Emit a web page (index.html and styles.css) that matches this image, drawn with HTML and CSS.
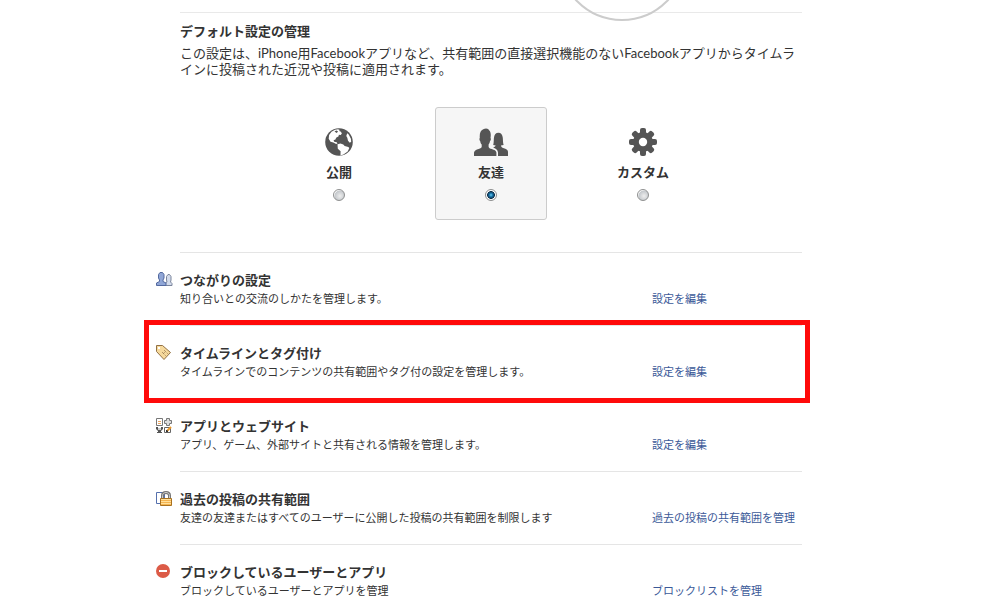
FILE: index.html
```
<!DOCTYPE html>
<html lang="ja">
<head>
    <meta charset="UTF-8">
    <meta name="viewport" content="width=device-width, initial-scale=1.0">
    <title>プライバシー設定</title>
    <link rel="stylesheet" href="styles.css">
</head>
<body>
    <main class="container">
        <section class="defaults">
            <span class="circle"></span>
            <h2>デフォルト設定の管理</h2>
            <p class="intro">この設定は、iPhone用Facebookアプリなど、共有範囲の直接選択機能のないFacebookアプリからタイムラインに投稿された近況や投稿に適用されます。</p>
            <div class="options">
                <label class="option">
                    <svg width="28" height="28" viewBox="0 0 28 28">
                        <circle cx="14" cy="14" r="13.8" fill="#555"/>
                        <path fill="#fff" d="M6.5 3.8 10 1.7l3-.5 1.8.7-.8 1.2 1.6.3 1.3 1.8-1.1 1.9-1.9-.3-.5 1.6-2 1.1-1.2 2.3-1.6.3.6 1.6 2.5.6.8 1.2-1.4.4-2.8-1.4-2.8-.7-1.8-3.1.4-3.7z"/>
                        <path fill="#555" d="m9.500 3.300 2.200-.8 1.400 1.200-1.700 1.400z"/>
                        <path fill="#fff" d="m12.500 16.200 3-.8 2.800 1.200 1.400 1.500 3.600.8 1 1.100-1.600 3.600-4.300 3-2.900.9.1-4.200-2.800-2.500z"/>
                        <path fill="#fff" d="m22.200 5.300 1.500 1.300 2.200 4.100.3 3-1.400 1-1.800-1.900-.7-3.100-1-1.700z"/>
                    </svg>
                    <span>公開</span>
                    <input type="radio" name="audience">
                </label>
                <label class="option selected">
                    <svg width="34" height="28" viewBox="0 0 34 28" fill="#555">
                        <path d="M0 28v-3.500c.5-2 2.200-2.700 4.600-3.500 2-.7 3-1.200 3.100-2.300v-2.100c-1.100-1-1.300-2.300-1.500-3.500-.8-.6-1.100-2.800-.4-3.200C5.400 5.500 6.500 2.200 9.300 1.300c2.400-1.500 5.200-.9 6 1.200 1.600 1.300 1.700 4.800 1.200 7.400.7.6.3 2.600-.5 3.200-.2 1.500-.6 2.600-1.400 3.500v2.100c.2 1.200 1.300 1.700 3.200 2.400 2.600.8 4.200 1.700 4.600 3.400V28z"/>
                        <path d="M19.500 19.200c1.100-.4 2-.8 2.200-1.700l-2.500-.5c.6-2 .5-4.200.7-7 .3-3.500 2-5.300 4.500-5.300s4.100 1.900 4.400 5.100c.2 2.900.1 5 .8 7.200l-2.700.5c.2 1.700 1.600 2.300 3.700 3.100 1.900.7 3.200 1.500 3.400 3.200V28H24v-3.500c-.3-2.500-1.900-3.900-4.500-4.800z"/>
                    </svg>
                    <span>友達</span>
                    <input type="radio" name="audience" checked>
                </label>
                <label class="option">
                    <svg width="28" height="28" viewBox="0 0 28 28">
                        <g fill="#555">
                            <circle cx="14" cy="14" r="10"/>
                            <rect id="tooth" x="11" y="0" width="6" height="28" rx="2"/>
                            <use href="#tooth" transform="rotate(45 14 14)"/>
                            <use href="#tooth" transform="rotate(90 14 14)"/>
                            <use href="#tooth" transform="rotate(135 14 14)"/>
                        </g>
                        <circle cx="14" cy="14" r="4.200" fill="#fff"/>
                    </svg>
                    <span>カスタム</span>
                    <input type="radio" name="audience">
                </label>
            </div>
        </section>

        <section class="row">
            <svg class="icon" width="17" height="16" viewBox="0 0 17 16">
                <path fill="#d3dbeb" stroke="#7b859c" d="M9.500 13.500V11l1.500-1-.5-2V4.500l1.500-2h1.500l1.500 2V8l-.5 2 1.500 1.500v2z"/>
                <path fill="#90a6d6" stroke="#53699f" d="M.5 13.500V11l3-1.500V8l-1-2V2.500l1.500-2h2.500l1.500 2V6L7 8v1.500l3 1.500v2.500z"/>
            </svg>
            <div class="info">
                <h3>つながりの設定</h3>
                <p>知り合いとの交流のしかたを管理します。</p>
            </div>
            <a href="#">設定を編集</a>
        </section>

        <section class="row highlight">
            <svg class="icon" width="17" height="16" viewBox="0 0 17 16">
                <path fill="#f6d99c" stroke="#927144" d="M.5.500h6l8 7-6.500 7-7.500-8z"/>
                <rect x="2" y="2" width="2" height="2" fill="#fff"/>
                <path stroke="#94764e" stroke-dasharray="1 1" d="m6 7 4 4M8 5l4 4M7 9l3-3"/>
            </svg>
            <div class="info">
                <h3>タイムラインとタグ付け</h3>
                <p>タイムラインでのコンテンツの共有範囲やタグ付の設定を管理します。</p>
            </div>
            <a href="#">設定を編集</a>
        </section>

        <section class="row">
            <svg class="icon" width="17" height="16" viewBox="0 0 17 16">
                <path fill="#fff" stroke="#777" d="M.5.500h6v7h-6z"/>
                <path stroke="#eda45d" d="M2 3.500h3M2 5.500h3"/>
                <path fill="#ddd" stroke="#777" d="M10.500.500h3v2h2v3h-2v2h-3v-2h-2v-3h2z"/>
                <path fill="#555" d="M0 9h2v1h3V9h2v2L5 13v1h1v1H1v-1h1v-1L0 11z"/>
                <path fill="#ccc" d="M2 10h3v2H2z"/>
                <path fill="#fff" stroke="#666" d="M8.500 9.500h6v5h-6z"/>
                <path stroke="#e9972c" stroke-width="2" d="m11 13 4-4"/>
                <path fill="#333" d="M10 12h1l1 1v1h-2z"/>
            </svg>
            <div class="info">
                <h3>アプリとウェブサイト</h3>
                <p>アプリ、ゲーム、外部サイトと共有される情報を管理します。</p>
            </div>
            <a href="#">設定を編集</a>
        </section>

        <section class="row">
            <svg class="icon" width="17" height="16" viewBox="0 0 17 16">
                <path fill="#fff" stroke="#5570ad" d="M.5 1.500h8v11h-8z"/>
                <path fill="none" stroke="#777" stroke-width="3" d="M6.500 8V4.500c0-4 7-4 7 0V8"/>
                <path fill="none" stroke="#ccc" d="M6.500 8V4.500c0-4 7-4 7 0V8"/>
                <path fill="#f5b450" stroke="#a97220" d="M4.500 7.500h11v7h-11z"/>
                <path stroke="#ffe09b" d="M5 8.500h10M5 10.500h10M5 12.500h10"/>
            </svg>
            <div class="info">
                <h3>過去の投稿の共有範囲</h3>
                <p>友達の友達またはすべてのユーザーに公開した投稿の共有範囲を制限します</p>
            </div>
            <a href="#">過去の投稿の共有範囲を管理</a>
        </section>

        <section class="row">
            <svg class="icon" width="17" height="16" viewBox="0 0 17 16">
                <circle cx="7" cy="7" r="7" fill="#dc5b47"/>
                <path fill="#fff" d="M3 6h8v2H3z"/>
            </svg>
            <div class="info">
                <h3>ブロックしているユーザーとアプリ</h3>
                <p>ブロックしているユーザーとアプリを管理</p>
            </div>
            <a href="#">ブロックリストを管理</a>
        </section>
    </main>
</body>
</html>
```
FILE: styles.css
```
* {
    box-sizing: border-box;
}
body {
    margin: 0;
    background-color: #fff;
    color: #333;
    font-family: Lato, "Noto Sans CJK JP", sans-serif;
    font-size: 13px;
    line-height: 16px;
    overflow-x: hidden;
}
h2, h3, p {
    margin: 0;
}
h2, h3 {
    font-size: 13px;
    font-weight: bold;
    line-height: 20px;
}
.container {
    max-width: 690px;
    margin: 0 auto;
    padding: 12px 43px 0 25px;
}
.defaults {
    position: relative;
    border-top: 1px solid #e9e9e9;
    padding: 8px 0 32px;
}
/* bottom of the ring hanging over the divider */
.circle {
    position: absolute;
    right: 116px;
    top: -120px;
    width: 128px;
    height: 128px;
    border: 2px solid #ccc;
    border-radius: 50%;
}
.intro {
    margin-top: 4px;
}
.options {
    display: flex;
    justify-content: center;
    gap: 40px;
    margin-top: 30px;
}
.option {
    display: flex;
    flex-direction: column;
    align-items: center;
    width: 112px;
    height: 113px;
    padding-top: 20px;
    border: 1px solid transparent;
    border-radius: 3px;
    font-weight: bold;
    cursor: pointer;
}
.option span {
    margin: 8px 0 9px;
}
.selected {
    background-color: #f6f6f6;
    border-color: #ccc;
}
input[type="radio"] {
    appearance: none;
    width: 12px;
    height: 12px;
    margin: 0;
    border: 1px solid #8e8f8f;
    border-radius: 50%;
    background: radial-gradient(circle at 60% 60%, #eee, #c4c8cc 60%, #fff 70%);
}
input[type="radio"]:checked {
    background: radial-gradient(circle, #6cd0f5 0, #1672a8 25%, #12344e 50%, #fff 60%);
}
.row {
    position: relative;
    display: flex;
    height: 73px;
    margin-left: -25px;
    padding-top: 18px;
}
.row::before {
    content: "";
    position: absolute;
    left: 25px;
    right: 0;
    top: 0;
    border-top: 1px solid #e5e5e5;
}
.icon {
    flex: none;
    margin: 2px 7px 0 1px;
}
.info {
    flex: 1;
}
.info p, .row a {
    font-size: 11px;
    line-height: 17px;
}
.row a {
    width: 150px;
    margin-top: 20px;
    color: #3b5998;
    text-decoration: none;
    white-space: nowrap;
}
.row a:hover {
    text-decoration: underline;
}
.highlight::after {
    content: "";
    position: absolute;
    z-index: 1;
    inset: -5px -8px -5px -11px;
    border: 5px solid #ff0a0a;
    pointer-events: none;
}
```
